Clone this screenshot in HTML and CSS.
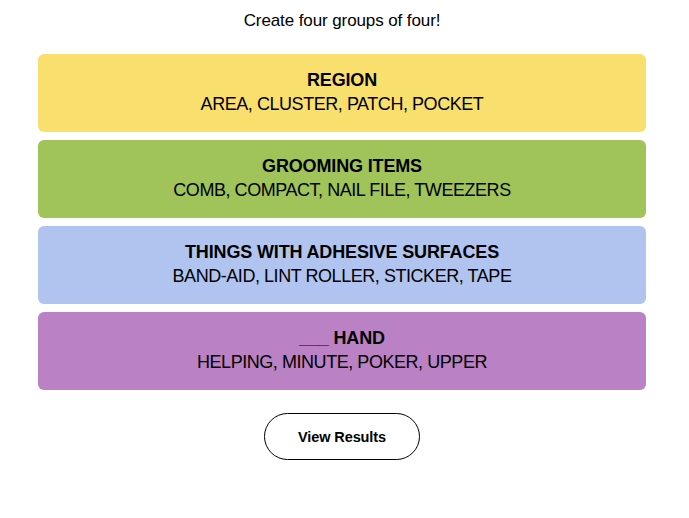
FILE: index.html
```html
<!DOCTYPE html>
<html>
<head>
<meta charset="utf-8">
<link rel="stylesheet" href="styles.css">
</head>
<body>
<main class="game">
  <p class="prompt">Create four groups of four!</p>
  <section class="groups">
    <div class="group yellow">
      <h3 class="title">REGION</h3>
      <p class="words">AREA, CLUSTER, PATCH, POCKET</p>
    </div>
    <div class="group green">
      <h3 class="title">GROOMING ITEMS</h3>
      <p class="words">COMB, COMPACT, NAIL FILE, TWEEZERS</p>
    </div>
    <div class="group blue">
      <h3 class="title">THINGS WITH ADHESIVE SURFACES</h3>
      <p class="words">BAND-AID, LINT ROLLER, STICKER, TAPE</p>
    </div>
    <div class="group purple">
      <h3 class="title">___ HAND</h3>
      <p class="words">HELPING, MINUTE, POKER, UPPER</p>
    </div>
  </section>
  <div class="actions">
    <button class="results">View Results</button>
  </div>
</main>
</body>
</html>
```

FILE: styles.css
```css
html, body {
  margin: 0;
  padding: 0;
  background: #ffffff;
}
body {
  font-family: "Liberation Sans", Arial, sans-serif;
  color: #000;
  padding-right: 5px;
}
.game {
  width: 608px;
  margin: 0 auto;
  padding-top: 10px;
  display: flex;
  flex-direction: column;
  align-items: stretch;
}
.prompt {
  margin: 0;
  text-align: center;
  font-size: 17px;
  line-height: 21px;
  letter-spacing: -0.1px;
}
.groups {
  margin-top: 23px;
  display: flex;
  flex-direction: column;
  gap: 8px;
}
.group {
  height: 78px;
  border-radius: 6px;
  display: flex;
  flex-direction: column;
  justify-content: center;
  align-items: center;
  padding-bottom: 2px;
  box-sizing: border-box;
}
.yellow { background: #f9df6d; }
.green { background: #a0c35a; }
.blue { background: #b0c4ef; }
.purple { background: #ba81c5; }
.title {
  margin: 0;
  font-size: 18px;
  line-height: 24px;
  font-weight: 700;
  letter-spacing: -0.15px;
}
.words {
  margin: 0;
  font-size: 18px;
  line-height: 24px;
  font-weight: 400;
  letter-spacing: -0.45px;
}
.actions {
  margin-top: 23px;
  display: flex;
  justify-content: center;
}
.results {
  width: 156px;
  height: 47px;
  border: 1px solid #000;
  border-radius: 24px;
  background: #fff;
  font-family: "Liberation Sans", Arial, sans-serif;
  font-size: 14.5px;
  font-weight: 700;
  color: #000;
  letter-spacing: -0.1px;
  cursor: pointer;
}
```
